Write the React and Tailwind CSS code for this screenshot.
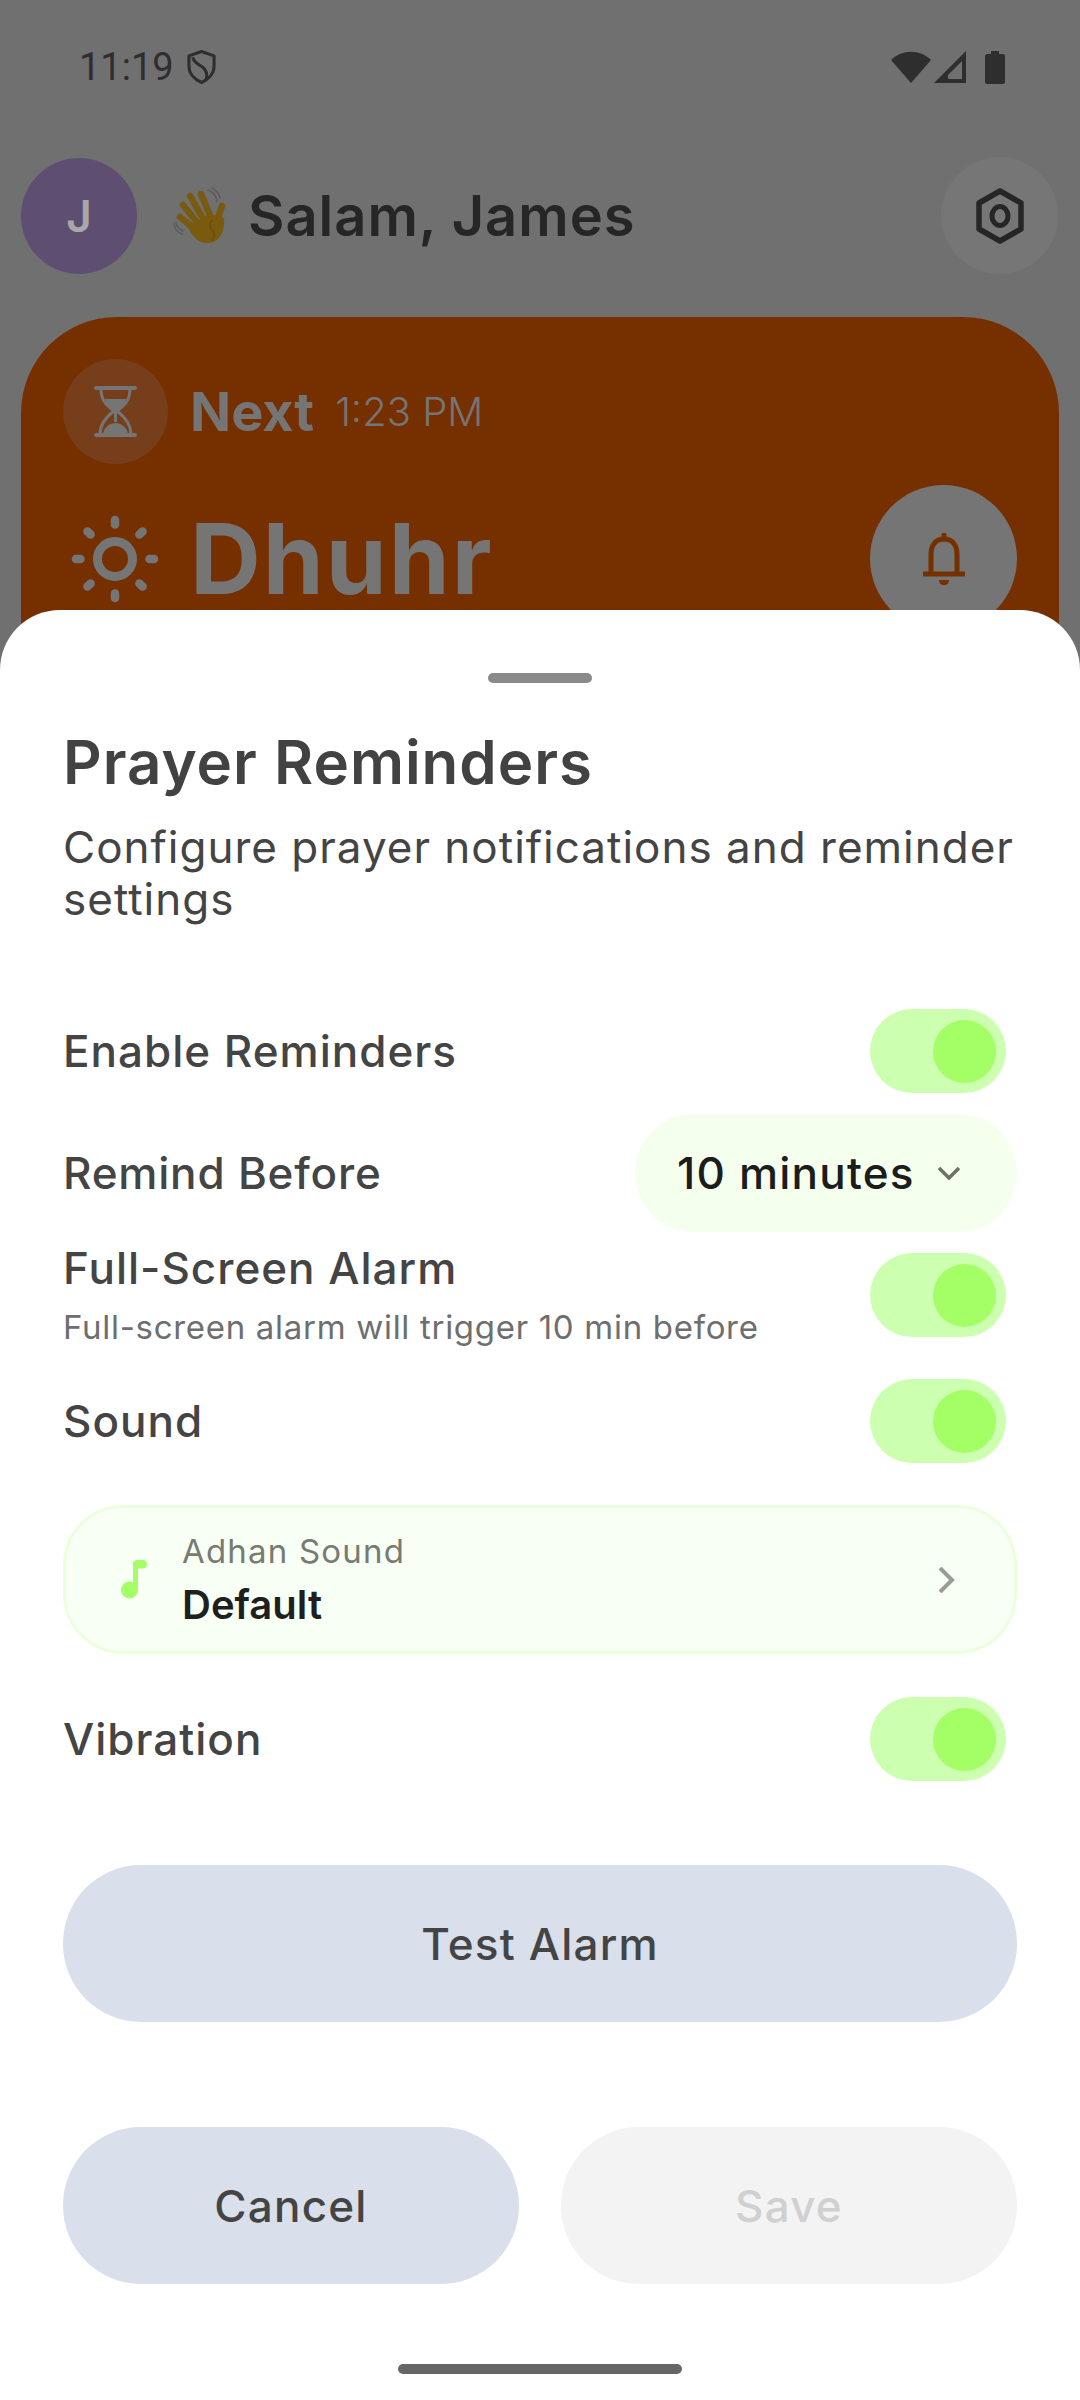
import { useState } from "react";

const toggleRows = {
  enable: "Enable Reminders",
  sound: "Sound",
  vibration: "Vibration",
};

/* =====================
   ICONS
===================== */
function ShieldIcon() {
  return (
    <svg width="29" height="36" viewBox="0 0 30 36" fill="none" stroke="#2e2e2e" strokeWidth="3.2" strokeLinejoin="round">
      <path d="M15 2 L28 6.5 V17 C28 25 22 31 15 34 C8 31 2 25 2 17 V6.5 Z" />
      <path d="M6 8 C7 14 12 15 16 18 C20 21 21 26 20 31" />
    </svg>
  );
}

function StatusIcons() {
  return (
    <div className="flex items-center">
      <svg width="40" height="32" viewBox="0 0 40 32" fill="#2e2e2e">
        <path d="M0 9 C11 -2 29 -2 40 9 L20 32 Z" />
      </svg>
      <svg width="32" height="32" viewBox="0 0 32 32" className="ml-[3px]" fill="none">
        <path fillRule="evenodd" clipRule="evenodd" d="M32 0 V32 H0 Z M28 10 L14 24 V28 H28 Z" fill="#2e2e2e" />
      </svg>
      <svg width="20" height="33" viewBox="0 0 20 33" className="ml-[19px]" fill="#2e2e2e">
        <path d="M6 0 H14 V3 H18 C19 3 20 4 20 5 V31 C20 32 19 33 18 33 H2 C1 33 0 32 0 31 V5 C0 4 1 3 2 3 H6 Z" />
      </svg>
    </div>
  );
}

function WaveHand() {
  return (
    <svg width="56" height="62" viewBox="20 15 56 62" fill="none">
      <path d="M58 20 C63 22 66 26 67 31 M62 18 C66 20 69 24 70 28" stroke="#5c5c5c" strokeWidth="1.5" strokeLinecap="round" />
      <path d="M24 53 C24 58 27 62 32 64 M26 52 C26 56 29 59 33 61" stroke="#5c5c5c" strokeWidth="1.5" strokeLinecap="round" />
      <g stroke="#7a5a0e" strokeWidth="6.5" strokeLinecap="round">
        <path d="M30 47 L45 59" />
        <path d="M33 35 L50 56" />
        <path d="M40 26 L55 52" />
        <path d="M51 24 L62 50" />
        <path d="M72 36 L65 56" />
      </g>
      <path d="M37 56 L60 44 L74 48 C75 61 70 73 57 73 C48 73 42 66 37 56 Z" fill="#7a5a0e" />
      <path d="M62 50 C59 54 60 58 63 61 C65 64 64 68 62 71" stroke="#634607" strokeWidth="1" />
    </svg>
  );
}

function HexGear() {
  return (
    <svg width="48" height="56" viewBox="0 0 48 56" fill="none" stroke="#262626">
      <path d="M24 3 L45 15 V41 L24 53 L3 41 V15 Z" strokeWidth="5.5" strokeLinejoin="round" />
      <ellipse cx="24" cy="28" rx="8" ry="9.5" strokeWidth="5" />
    </svg>
  );
}

function HourglassIcon() {
  return (
    <svg width="43" height="51" viewBox="0 0 43 51" fill="none" stroke="#757575">
      <path d="M2 2 H41 M2 49 H41" strokeWidth="4" strokeLinecap="round" />
      <path d="M7 3 C7 14 12 19 20 25 C12 31 6 38 6 48 M36 3 C36 14 31 19 23 25 C31 31 37 38 37 48" strokeWidth="3" />
      <path d="M11 13 H32 C30 19 26 22 21.5 25 C17 22 13 19 11 13 Z" fill="#757575" stroke="none" />
      <path d="M21.5 25 V36" strokeWidth="3" />
      <path d="M9 48 C10 41 16 37 21.5 37 C27 37 33 41 34 48 Z" fill="#757575" stroke="none" />
    </svg>
  );
}

function SunIcon() {
  const rays = [0, 45, 90, 135, 180, 225, 270, 315];
  return (
    <svg width="88" height="88" viewBox="-44 -44 88 88" fill="none" stroke="#757575">
      <circle r="17.5" strokeWidth="9" />
      {rays.map(angle => (
        <line key={angle} x1="0" y1="-34.5" x2="0" y2="-39" strokeWidth="8.5" strokeLinecap="round" transform={`rotate(${angle})`} />
      ))}
    </svg>
  );
}

function BellIcon() {
  return (
    <svg width="42" height="52" viewBox="0 0 42 52" fill="none" stroke="#763000">
      <path d="M21 1 V6" strokeWidth="5" strokeLinecap="round" />
      <path d="M8 40 V21 C8 12 13 6 21 6 C29 6 34 12 34 21 V40" strokeWidth="5" />
      <path d="M1 41 H41" strokeWidth="5" strokeLinecap="round" />
      <path d="M16 47 H26 C26 50 24 52 21 52 C18 52 16 50 16 47 Z" fill="#763000" stroke="none" />
    </svg>
  );
}

function NoteIcon() {
  return (
    <svg width="26" height="39" viewBox="0 0 26 39" fill="#a4ff66">
      <circle cx="8.5" cy="30" r="8.5" />
      <rect x="12" y="2" width="5" height="28" />
      <rect x="12" y="0" width="14" height="8.5" rx="4.25" />
    </svg>
  );
}

/* =====================
   CONTROLS
===================== */
function Toggle({ on = true, onClick }) {
  return (
    <button
      onClick={onClick}
      className={`mr-[11px] flex h-[84px] w-[136px] shrink-0 items-center rounded-full px-[10px] ${on ? "justify-end bg-[#ccffb0]" : "justify-start bg-gray-200"}`}
    >
      <span className={`size-[63px] rounded-full ${on ? "bg-[#a4ff66]" : "bg-gray-400"}`} />
    </button>
  );
}

function Row({ label, on, onToggle, className = "" }) {
  return (
    <div className={`flex h-[84px] items-center justify-between ${className}`}>
      <span className="text-[44px] font-[450] leading-[51px] tracking-[1px] text-[#444444]">{label}</span>
      <Toggle on={on} onClick={onToggle} />
    </div>
  );
}

export default function App() {
  const [settings, setSettings] = useState({ enable: true, fullScreen: true, sound: true, vibration: true });

  const flip = key => setSettings(s => ({ ...s, [key]: !s[key] }));

  return (
    <div className="relative h-[2400px] w-[1080px] overflow-hidden bg-[#707070] font-['Inter',sans-serif]">
      {/* STATUS BAR */}
      <div className="flex h-[93px] items-center justify-between pl-[79px] pr-[75px] pt-[41px]">
        <div className="flex items-center gap-[13px] font-['Roboto',sans-serif] text-[38px] leading-none text-[#2e2e2e]">
          <span>11:19</span>
          <ShieldIcon />
        </div>
        <StatusIcons />
      </div>

      {/* GREETING */}
      <div className="mt-[64px] flex items-center justify-between pl-[21px] pr-[22px]">
        <div className="flex items-center">
          <div className="flex size-[116px] items-center justify-center rounded-full bg-[#5e4f72] text-[44px] font-semibold text-[#a8a8a8]">
            J
          </div>
          <div className="ml-[33px]">
            <WaveHand />
          </div>
          <span className="ml-[22px] text-[56px] font-semibold leading-none tracking-[1px] text-[#262626]">Salam, James</span>
        </div>
        <div className="flex size-[117px] items-center justify-center rounded-full bg-[#767676]">
          <HexGear />
        </div>
      </div>

      {/* NEXT PRAYER CARD */}
      <div className="mx-[21px] mt-[43px] h-[500px] rounded-[96px] bg-[#763000] pl-[42px] pr-[42px] pt-[42px]">
        <div className="flex items-center">
          <div className="flex size-[105px] items-center justify-center rounded-full bg-[#763e1a]">
            <HourglassIcon />
          </div>
          <span className="ml-[22px] text-[54px] font-bold leading-none text-[#757575]">Next</span>
          <span className="ml-[21px] text-[40px] font-light leading-none text-[#757575]">1:23 PM</span>
        </div>
        <div className="mt-[21px] flex items-center justify-between">
          <div className="flex items-center">
            <div className="ml-[8px]">
              <SunIcon />
            </div>
            <span className="ml-[31px] text-[98px] font-bold leading-none tracking-[2px] text-[#757575]">Dhuhr</span>
          </div>
          <div className="flex size-[147px] items-center justify-center rounded-full bg-[#757575]">
            <BellIcon />
          </div>
        </div>
      </div>

      {/* BOTTOM SHEET */}
      <div className="absolute inset-x-0 bottom-0 top-[610px] rounded-t-[60px] bg-white px-[63px] pt-[63px]">
        <div className="mx-auto h-[10px] w-[104px] rounded-full bg-[#8a8a8a]" />

        <h1 className="mt-[45px] text-[60px] font-semibold leading-[68px] tracking-[1px] text-[#424242]">Prayer Reminders</h1>
        <p className="mt-[25px] text-[44px] leading-[52px] tracking-[1px] text-[#444444]">
          Configure prayer notifications and reminder settings
        </p>

        <Row label={toggleRows.enable} on={settings.enable} onToggle={() => flip("enable")} className="mt-[84px]" />

        <div className="mt-[21px] flex h-[118px] items-center justify-between">
          <span className="text-[44px] font-[450] leading-[51px] tracking-[0.8px] text-[#444444]">Remind Before</span>
          <button className="flex h-[118px] w-[382px] items-center rounded-full bg-[#f4ffee] pl-[42px]">
            <span className="text-[44px] font-medium tracking-[1.2px] text-[#1c1c1c]">10 minutes</span>
            <svg width="24" height="14" viewBox="0 0 24 14" fill="none" stroke="#6c7268" strokeWidth="3.5" className="ml-auto mr-[56px]">
              <path d="M2 2 L12 12 L22 2" />
            </svg>
          </button>
        </div>

        <div className="mt-[21px] flex h-[84px] items-center justify-between">
          <div className="flex flex-col">
            <span className="text-[44px] font-[450] leading-[51px] tracking-[1px] text-[#444444]">Full-Screen Alarm</span>
            <span className="mt-[13px] text-[33px] leading-[40px] tracking-[0.7px] text-[#6e6e6e]">Full-screen alarm will trigger 10 min before</span>
          </div>
          <Toggle on={settings.fullScreen} onClick={() => flip("fullScreen")} />
        </div>

        <Row label={toggleRows.sound} on={settings.sound} onToggle={() => flip("sound")} className="mt-[42px]" />

        {/* ADHAN SOUND PICKER */}
        <button className="mt-[42px] flex h-[149px] w-full items-center rounded-[60px] border-[3px] border-[#ebffdf] bg-[#f8fff4] text-left">
          <span className="ml-[55px]">
            <NoteIcon />
          </span>
          <span className="ml-[35px] flex flex-col pb-[1px]">
            <span className="text-[33px] leading-[40px] tracking-[1.2px] text-[#777b72]">Adhan Sound</span>
            <span className="mt-[11px] text-[40px] font-semibold leading-[46px] text-[#1f1f1f]">Default</span>
          </span>
          <svg width="18" height="26" viewBox="0 0 18 26" fill="none" stroke="#9a9c96" strokeWidth="4" className="ml-auto mr-[59px]">
            <path d="M3 1 L15 13 L3 25" />
          </svg>
        </button>

        <Row label={toggleRows.vibration} on={settings.vibration} onToggle={() => flip("vibration")} className="mt-[43px]" />

        <button className="mt-[84px] h-[157px] w-full rounded-[78px] bg-[#d9dfeb] text-[44px] font-[450] tracking-[1.2px] text-[#444444]">
          Test Alarm
        </button>

        <div className="mt-[105px] grid grid-cols-2 gap-[42px]">
          <button className="h-[157px] rounded-[78px] bg-[#d9dfeb] text-[44px] font-[450] tracking-[1.2px] text-[#444444]">Cancel</button>
          <button disabled className="h-[157px] rounded-[78px] bg-[#f3f3f3] text-[44px] font-[450] tracking-[1.2px] text-[#d0d0d0]">
            Save
          </button>
        </div>

        <div className="mx-auto mt-[80px] h-[10px] w-[284px] rounded-full bg-[#666666]" />
      </div>
    </div>
  );
}
